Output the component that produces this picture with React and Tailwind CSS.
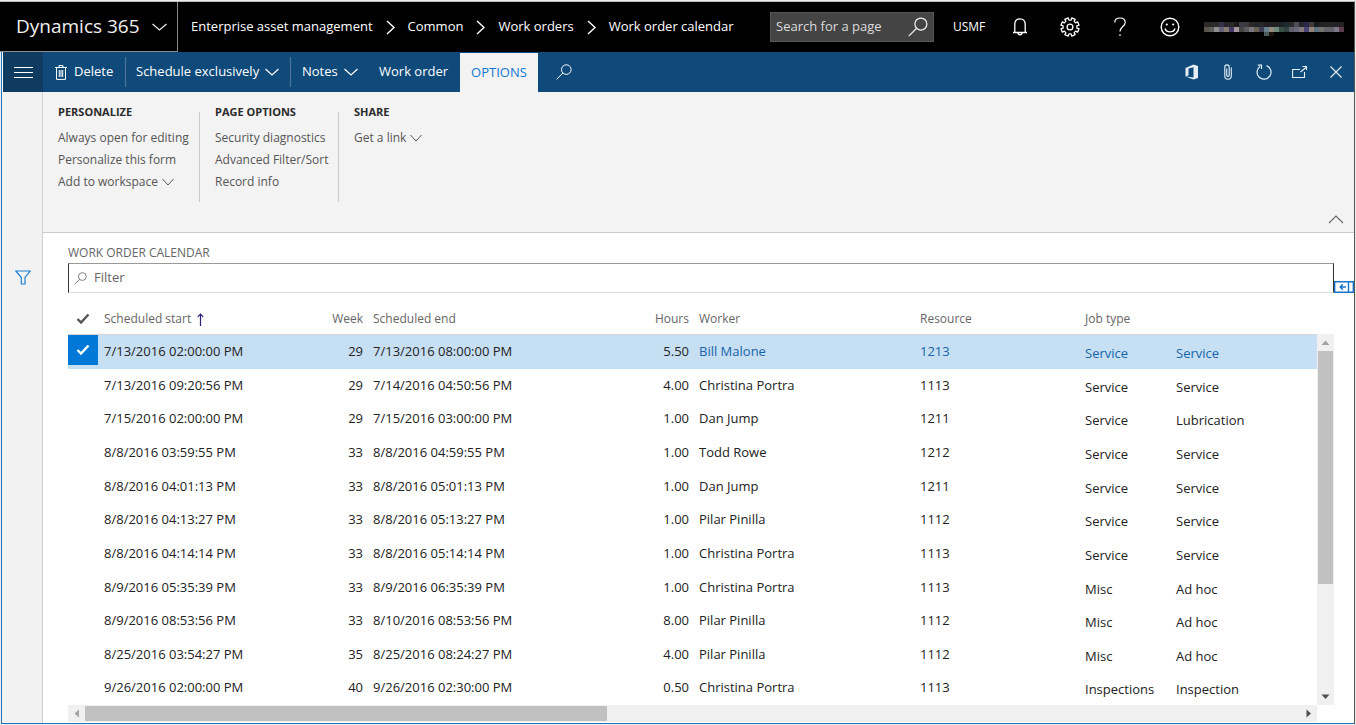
import React, { useState } from "react";

const rows = [
  ["7/13/2016 02:00:00 PM", "29", "7/13/2016 08:00:00 PM", "5.50", "Bill Malone", "1213", "Service", "Service"],
  ["7/13/2016 09:20:56 PM", "29", "7/14/2016 04:50:56 PM", "4.00", "Christina Portra", "1113", "Service", "Service"],
  ["7/15/2016 02:00:00 PM", "29", "7/15/2016 03:00:00 PM", "1.00", "Dan Jump", "1211", "Service", "Lubrication"],
  ["8/8/2016 03:59:55 PM", "33", "8/8/2016 04:59:55 PM", "1.00", "Todd Rowe", "1212", "Service", "Service"],
  ["8/8/2016 04:01:13 PM", "33", "8/8/2016 05:01:13 PM", "1.00", "Dan Jump", "1211", "Service", "Service"],
  ["8/8/2016 04:13:27 PM", "33", "8/8/2016 05:13:27 PM", "1.00", "Pilar Pinilla", "1112", "Service", "Service"],
  ["8/8/2016 04:14:14 PM", "33", "8/8/2016 05:14:14 PM", "1.00", "Christina Portra", "1113", "Service", "Service"],
  ["8/9/2016 05:35:39 PM", "33", "8/9/2016 06:35:39 PM", "1.00", "Christina Portra", "1113", "Misc", "Ad hoc"],
  ["8/9/2016 08:53:56 PM", "33", "8/10/2016 08:53:56 PM", "8.00", "Pilar Pinilla", "1112", "Misc", "Ad hoc"],
  ["8/25/2016 03:54:27 PM", "35", "8/25/2016 08:24:27 PM", "4.00", "Pilar Pinilla", "1112", "Misc", "Ad hoc"],
  ["9/26/2016 02:00:00 PM", "40", "9/26/2016 02:30:00 PM", "0.50", "Christina Portra", "1113", "Inspections", "Inspection"],
];

const crumbs = ["Enterprise asset management", "Common", "Work orders", "Work order calendar"];

function Icon({ w, h, children, className = "", sw = 1.2 }) {
  return (
    <svg width={w} height={h} viewBox={`0 0 ${w} ${h}`} fill="none" stroke="currentColor" strokeWidth={sw} className={`shrink-0 ${className}`} aria-hidden="true">
      {children}
    </svg>
  );
}

const ChevronDown = ({ w = 14, sw, className }) => (
  <Icon w={w} h={8} sw={sw} className={className}>
    <path d={`M.5 1 L${w / 2} 7 L${w - 0.5} 1`} />
  </Icon>
);

const Magnifier = ({ size = 16, className }) => (
  <svg width={size} height={size} viewBox="0 0 16 16" fill="none" stroke="currentColor" strokeWidth="1" className={`shrink-0 ${className || ""}`} aria-hidden="true">
    <circle cx="10.3" cy="5.6" r="4.8" />
    <path d="M6.9 9 L.6 15.3" />
  </svg>
);

function Gear() {
  const pts = [];
  for (let i = 0; i < 8; i++) {
    [[-0.24, 7], [-0.2, 9.2], [0.2, 9.2], [0.24, 7]].forEach(([a, r]) => {
      const t = (i * Math.PI) / 4 + Math.PI / 8 + a;
      pts.push(`${(10 + r * Math.cos(t)).toFixed(2)},${(10 + r * Math.sin(t)).toFixed(2)}`);
    });
  }
  return (
    <Icon w={20} h={20} sw={1.3}>
      <polygon points={pts.join(" ")} strokeLinejoin="round" />
      <circle cx="10" cy="10" r="2.9" />
    </Icon>
  );
}

const mosaicTop = ["#2d2a27", "#2b2c28", "#2a2d2c", "#38334a", "#25242b", "#2b2927", "#1c1a18", "#3c3c44", "#3b3a3c", "#2b2722", "#22242b", "#26282a", "#1f1e22", "#202024", "#1e2222", "#202324", "#1d2b30", "#2a2a2a", "#4f4d55", "#28262d", "#29284a", "#413a38", "#141d1f", "#242221", "#252423", "#262423", "#242224", "#242124"];
const mosaicMid = ["#575449", "#605e58", "#8f8e90", "#666079", "#857c70", "#433a68", "#a4969a", "#474542", "#5a5a5e", "#79777d", "#68604f", "#3d3e55", "#65808b", "#94877e", "#6d8a7d", "#395047", "#334042", "#61616d", "#67677a", "#857980", "#4a4579", "#938679", "#5c7280", "#75736f", "#64646a", "#62616a", "#7b7886", "#5b3b4b"];

function UserName() {
  return (
    <svg width="140" height="15" viewBox="0 0 140 15" shapeRendering="crispEdges" role="img" aria-label="Signed-in user">
      {mosaicTop.map((c, i) => <rect key={i} x={i * 5} y="0" width="5" height="5" fill={c} />)}
      {mosaicMid.map((c, i) => <rect key={i} x={i * 5} y="5" width="5" height="5" fill={c} />)}
      <rect x="60" y="10" width="5" height="4" fill="#4b5c60" />
      <rect x="65" y="10" width="5" height="4" fill="#1b120c" />
    </svg>
  );
}

function HeaderButton({ label, children }) {
  return <button aria-label={label} className="flex h-full w-[50px] items-center justify-center">{children}</button>;
}

function TopBar() {
  return (
    <header className="flex h-[50px] shrink-0 items-stretch bg-black text-white">
      <button className="flex w-[178px] items-center gap-3 border-r border-b border-[#8a8a8a] pl-4 text-[19px] text-[#f0f0f0]">
        Dynamics 365
        <ChevronDown w={15} />
      </button>
      <nav aria-label="Breadcrumb" className="flex items-center gap-[13px] pl-[13px] text-[13px] whitespace-nowrap">
        {crumbs.map((c, i) => (
          <React.Fragment key={c}>
            {i > 0 && <Icon w={9} h={15} sw={1.4}><path d="M1 1 L8 7.5 L1 14" /></Icon>}
            <a href="#">{c}</a>
          </React.Fragment>
        ))}
      </nav>
      <div className="ml-auto flex items-center pr-2.5">
        <label className="flex h-[30px] w-[164px] items-center border border-[#555] bg-[#444] px-[5px]">
          <input aria-label="Search for a page" placeholder="Search for a page" className="w-full min-w-0 bg-transparent text-[13px] text-white outline-none placeholder:text-[#dcdcdc]" />
          <Magnifier size={20} className="text-[#eee]" />
        </label>
        <button className="w-[61px] pl-[19px] text-left text-xs">USMF</button>
        <HeaderButton label="Notifications">
          <Icon w={16} h={20} sw={1.3}>
            <path d="M1 15.5 H15 M2.8 15.5 V7.5 C2.8 3.8 5 1.8 8 1.8 S13.2 3.8 13.2 7.5 V15.5 M6 16 C6 18.3 10 18.3 10 16" />
          </Icon>
        </HeaderButton>
        <HeaderButton label="Settings"><Gear /></HeaderButton>
        <HeaderButton label="Help">
          <Icon w={14} h={20} sw={1.2}>
            <path d="M1.8 5.5 C1.8 2.8 4 1 7 1 C10 1 12.2 2.8 12.2 5.4 C12.2 9.6 7 9.4 7 14.6 M7 17.2 V19" />
          </Icon>
        </HeaderButton>
        <HeaderButton label="Feedback">
          <Icon w={20} h={20} sw={1.4}>
            <circle cx="10" cy="10" r="8.8" />
            <path d="M5 11.5 C6.5 16 13.5 16 15 11.5" />
            <circle cx="6.8" cy="7.5" r="1.1" fill="currentColor" stroke="none" />
            <circle cx="13.2" cy="7.5" r="1.1" fill="currentColor" stroke="none" />
          </Icon>
        </HeaderButton>
        <button className="ml-[9px] pt-1"><UserName /></button>
      </div>
    </header>
  );
}

function ToolButton({ label, children }) {
  return <button aria-label={label} className="flex h-full w-9 items-center justify-center text-[#e6eef6]">{children}</button>;
}

function ActionBar() {
  return (
    <div className="ml-px flex h-10 shrink-0 items-center bg-[#104a7b] text-[13px] whitespace-nowrap text-white">
      <button aria-label="Navigation" className="flex h-full w-10 items-center justify-center bg-[#0f3b61]">
        <Icon w={19} h={12} sw={1}><path d="M0 1.5 H19 M0 6.5 H19 M0 11.5 H19" /></Icon>
      </button>
      <button className="flex h-[30px] w-[83px] items-center gap-[7px] border-r border-[#52799c] pl-3">
        <Icon w={12} h={15} sw={1}><path d="M0 2.5 H12 M4 2.5 V.6 H8 V2.5 M1.5 2.5 V14.4 H10.5 V2.5 M4.3 5 V12 M6 5 V12 M7.7 5 V12" /></Icon>
        Delete
      </button>
      <button className="flex h-[30px] w-[165px] items-center gap-1.5 border-r border-[#52799c] pl-2.5">Schedule exclusively<ChevronDown /></button>
      <button className="flex h-[30px] w-[88px] items-center gap-1.5 pl-[11px]">Notes<ChevronDown /></button>
      <button className="h-full w-[81px] text-left">Work order</button>
      <button className="mt-px h-[39px] w-[78px] bg-[#f3f3f3] text-[#0f78d4]">OPTIONS</button>
      <button aria-label="Search actions" className="flex h-full w-[52px] items-center justify-center"><Magnifier size={16} /></button>
      <div className="ml-auto flex h-full">
        <ToolButton label="Open in Office">
          <Icon w={14} h={16} sw={1}><path fill="currentColor" stroke="none" d="M.5 4 L8.5 .5 L13 2 V14 L8.5 15.5 L.5 12.5 L8.5 13.4 V3.2 L3.5 4.5 V11.2 L.5 12.5 Z" /></Icon>
        </ToolButton>
        <ToolButton label="Attachments">
          <Icon w={8} h={16} sw={1.1}><path d="M2.7 4.5 V11 C2.7 12.8 5.2 12.8 5.2 11 V3 C5.2 .2 .8 .2 .8 3 V12 C.8 16.3 7.3 16.3 7.3 12 V3.5" /></Icon>
        </ToolButton>
        <ToolButton label="Refresh">
          <Icon w={16} h={16} sw={1.2}><path d="M10.5 1.6 A7 7 0 1 1 4 2.4 M1.8 1.2 H5.5 V5" /></Icon>
        </ToolButton>
        <ToolButton label="Open in new window">
          <Icon w={16} h={14} sw={1.1}><path d="M8 4.5 H.6 V12.5 H12.5 V7 M8.5 7 L14 2.5 M10.5 1.5 H14.5 V5" /></Icon>
        </ToolButton>
        <ToolButton label="Close">
          <Icon w={12} h={12} sw={1.1}><path d="M.5 .5 L11.5 11.5 M11.5 .5 L.5 11.5" /></Icon>
        </ToolButton>
      </div>
    </div>
  );
}

function RibbonGroup({ title, items, width, last }) {
  return (
    <section className="flex items-start" style={{ width }}>
      <div className="flex-1 whitespace-nowrap">
        <h2 className="mb-[7px] h-4 text-[11px] leading-4 font-bold text-[#2b2b2b]">{title}</h2>
        {items.map(([t, menu]) => (
          <button key={t} className="flex h-[22px] items-center gap-1 text-xs text-[#555]">
            {t}
            {menu && <ChevronDown w={12} sw={1} />}
          </button>
        ))}
      </div>
      {!last && <div className="mt-2 h-[90px] w-px bg-[#c9c9c9]" />}
    </section>
  );
}

function Ribbon() {
  return (
    <div className="flex h-[141px] shrink-0 justify-between border-b border-[#cacaca] bg-[#f3f3f3] pt-3 pl-[15px]">
      <div className="flex gap-[15px]">
        <RibbonGroup title="PERSONALIZE" width={142} items={[["Always open for editing"], ["Personalize this form"], ["Add to workspace", true]]} />
        <RibbonGroup title="PAGE OPTIONS" width={124} items={[["Security diagnostics"], ["Advanced Filter/Sort"], ["Record info"]]} />
        <RibbonGroup title="SHARE" width={100} last items={[["Get a link", true]]} />
      </div>
      <button aria-label="Collapse" className="mr-2.5 mb-2 self-end text-[#666]">
        <Icon w={16} h={9} sw={1.1}><path d="M1 8 L8 1 L15 8" /></Icon>
      </button>
    </div>
  );
}

const Arrow = ({ d, dim }) => (
  <svg width="17" height="17" viewBox="0 0 17 17" className={`shrink-0 ${dim ? "fill-[#a3a3a3]" : "fill-[#505050]"}`} aria-hidden="true"><path d={d} /></svg>
);

function Check({ label, checked, onChange, header }) {
  return (
    <label className={`relative flex h-[30px] w-[30px] items-center justify-center ${header ? "text-[#555]" : checked ? "bg-[#0078d7] text-white" : "text-transparent"}`}>
      <input type="checkbox" aria-label={label} checked={checked} onChange={onChange} className="absolute inset-0 h-full w-full cursor-pointer appearance-none" />
      <Icon w={14} h={12} sw={2.4}><path d="M1.5 6 L5 9.5 L12.5 1.5" /></Icon>
    </label>
  );
}

function Grid() {
  const [selected, setSelected] = useState([0]);
  const toggle = (i) => setSelected((s) => (s.includes(i) ? s.filter((x) => x !== i) : [...s, i]));
  return (
    <div className="flex min-h-0 flex-1 flex-col pr-5 pb-px">
      <div className="flex flex-1">
        <table className="h-full flex-1 table-fixed border-collapse text-left text-[13px] whitespace-nowrap text-[#222]">
          <colgroup>
            <col className="w-[30px]" />
            <col className="w-[202px]" />
            <col className="w-[67px]" />
            <col className="w-[273px]" />
            <col className="w-[53px]" />
            <col className="w-[221px]" />
            <col className="w-[165px]" />
            <col className="w-[91px]" />
            <col />
          </colgroup>
          <thead>
            <tr className="h-[41px] border-b border-[#d4d4d4] text-xs text-[#666]">
              <th className="p-0 pt-[11px] font-normal"><Check header label="Select all rows" checked={selected.length === rows.length} onChange={() => setSelected(selected.length === rows.length ? [] : rows.map((_, i) => i))} /></th>
              <th className="pt-[11px] pl-1.5 font-normal">
                <button className="flex items-center gap-1.5">
                  Scheduled start
                  <Icon w={7} h={13} sw={1.2} className="text-[#2c1f7c]"><path d="M3.5 13 V1 M.8 3.8 L3.5 1 L6.2 3.8" /></Icon>
                </button>
              </th>
              <th className="pt-[11px] pr-1 text-right font-normal">Week</th>
              <th className="pt-[11px] pl-1.5 font-normal">Scheduled end</th>
              <th className="pt-[11px] pr-1 text-right font-normal">Hours</th>
              <th className="pt-[11px] pl-1.5 font-normal">Worker</th>
              <th className="pt-[11px] pl-1.5 font-normal">Resource</th>
              <th className="pt-[11px] pl-1.5 font-normal">Job type</th>
              <td />
            </tr>
          </thead>
          <tbody>
            {rows.map((r, i) => {
              const on = selected.includes(i);
              const link = on ? "text-[#1664a7]" : "";
              return (
                <tr key={i} className={on ? "bg-[#c7dff3]" : ""}>
                  <td className="p-0 align-top"><Check label={`Select row ${i + 1}`} checked={on} onChange={() => toggle(i)} /></td>
                  <td className="pl-1.5">{r[0]}</td>
                  <td className="pr-1 text-right">{r[1]}</td>
                  <td className="pl-1.5">{r[2]}</td>
                  <td className="pr-1 text-right">{r[3]}</td>
                  <td className={`pl-1.5 ${link}`}>{r[4]}</td>
                  <td className={`pl-1.5 ${link}`}>{r[5]}</td>
                  <td className={`pt-1 pl-1.5 ${link}`}>{r[6]}</td>
                  <td className={`pt-1 pl-1.5 ${link}`}>{r[7]}</td>
                </tr>
              );
            })}
          </tbody>
        </table>
        <div className="mt-[41px] flex w-[17px] flex-col items-center bg-[#f0f0f0]">
          <Arrow dim d="M4.5 11 L8.5 6.5 L12.5 11 Z" />
          <div className="w-[15px] flex-1"><div className="h-[69%] bg-[#c1c1c1]" /></div>
          <Arrow d="M4.5 6.5 L8.5 11 L12.5 6.5 Z" />
        </div>
      </div>
      <div className="mr-[17px] flex h-[17px] shrink-0 items-center bg-[#f0f0f0]">
        <Arrow dim d="M11 4.5 L6.5 8.5 L11 12.5 Z" />
        <div className="h-[15px] flex-1"><div className="h-full w-[43%] bg-[#c1c1c1]" /></div>
        <Arrow d="M6.5 4.5 L11 8.5 L6.5 12.5 Z" />
      </div>
    </div>
  );
}

export default function App() {
  return (
    <div className="flex min-h-screen flex-col bg-[#ececec] pt-px pr-px pb-px font-['Open_Sans','Noto_Sans',sans-serif] [&_button]:cursor-pointer">
      <div className="flex flex-1 flex-col border-t border-r border-t-[#bdbdbd] border-r-[#555]">
        <TopBar />
        <div className="ml-px flex flex-1 flex-col border-b border-l border-[#1f76bd] bg-white">
          <ActionBar />
          <div className="flex flex-1">
            <aside className="flex w-[41px] shrink-0 justify-center border-r border-[#cfcfcf] bg-[#f2f2f2] pt-[178px] pl-0.5">
              <button aria-label="Show filters" className="self-start text-[#1a7fd6]">
                <Icon w={16} h={15} sw={1.2}><path d="M.8 1 H15.2 L10 7.5 V14 H6.3 V7.5 Z" /></Icon>
              </button>
            </aside>
            <main className="flex min-w-0 flex-1 flex-col">
              <Ribbon />
              <div className="flex flex-1 flex-col pt-3 pl-[25px]">
                <h1 className="mb-0.5 text-xs leading-4 text-[#666]">WORK ORDER CALENDAR</h1>
                <div className="flex items-end">
                  <label className="flex h-[30px] flex-1 items-center gap-[7px] border border-x-[#333] border-t-[#999] border-b-[#dcdcdc] pl-[5px] text-[#666]">
                    <Magnifier size={13} />
                    <input aria-label="Filter" placeholder="Filter" className="min-w-0 flex-1 bg-transparent text-[13px] outline-none placeholder:text-[#666]" />
                  </label>
                  <button aria-label="Show related information" className="w-5 text-[#1674cf]">
                    <Icon w={20} h={12} sw={1.4}><path d="M.7 .7 H19.3 V11.3 H.7 Z M14.5 .7 V11.3 M6 6 H12 M8.8 3.3 L6.2 6 L8.8 8.7" /></Icon>
                  </button>
                </div>
                <Grid />
              </div>
            </main>
          </div>
        </div>
      </div>
    </div>
  );
}
